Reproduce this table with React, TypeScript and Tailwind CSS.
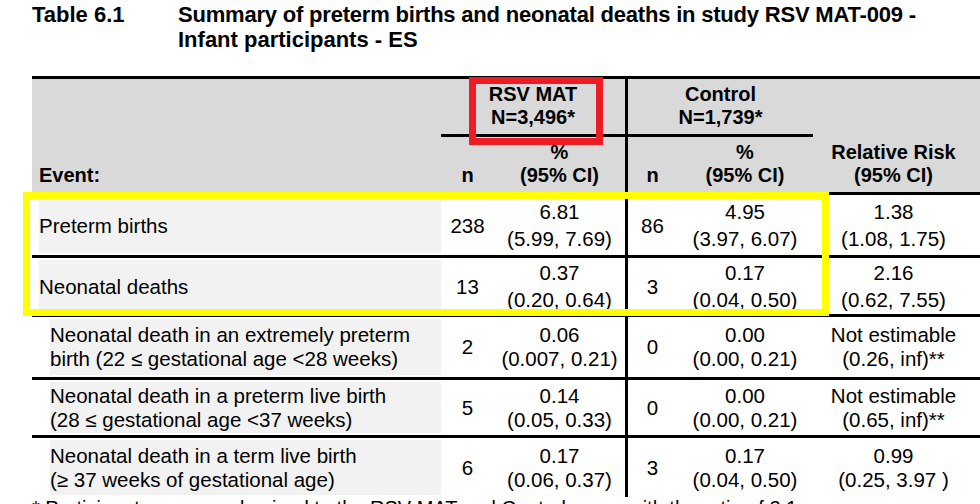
import React from 'react'

const COLS = 'grid grid-cols-[409px_53px_131px_52px_136px_167px]'

type Row = {
  label: string[]
  main: boolean
  h: string
  lead: string
  n1: string
  p1: string[]
  n2: string
  p2: string[]
  rr: string[]
  last?: boolean
}

const rows: Row[] = [
  {
    label: ['Preterm births'],
    main: true,
    h: 'h-[63px]',
    lead: 'leading-[27px]',
    n1: '238',
    p1: ['6.81', '(5.99, 7.69)'],
    n2: '86',
    p2: ['4.95', '(3.97, 6.07)'],
    rr: ['1.38', '(1.08, 1.75)'],
  },
  {
    label: ['Neonatal deaths'],
    main: true,
    h: 'h-[59px]',
    lead: 'leading-[27px]',
    n1: '13',
    p1: ['0.37', '(0.20, 0.64)'],
    n2: '3',
    p2: ['0.17', '(0.04, 0.50)'],
    rr: ['2.16', '(0.62, 7.55)'],
  },
  {
    label: ['Neonatal death in an extremely preterm', 'birth (22 ≤ gestational age <28 weeks)'],
    main: false,
    h: 'h-[63px]',
    lead: 'leading-[24px]',
    n1: '2',
    p1: ['0.06', '(0.007, 0.21)'],
    n2: '0',
    p2: ['0.00', '(0.00, 0.21)'],
    rr: ['Not estimable', '(0.26, inf)**'],
  },
  {
    label: ['Neonatal death in a preterm live birth', '(28 ≤ gestational age <37 weeks)'],
    main: false,
    h: 'h-[58px]',
    lead: 'leading-[24px]',
    n1: '5',
    p1: ['0.14', '(0.05, 0.33)'],
    n2: '0',
    p2: ['0.00', '(0.00, 0.21)'],
    rr: ['Not estimable', '(0.65, inf)**'],
  },
  {
    label: ['Neonatal death in a term live birth', '(≥ 37 weeks of gestational age)'],
    main: false,
    h: 'h-[59px]',
    lead: 'leading-[24px]',
    n1: '6',
    p1: ['0.17', '(0.06, 0.37)'],
    n2: '3',
    p2: ['0.17', '(0.04, 0.50)'],
    rr: ['0.99', '(0.25, 3.97 )'],
    last: true,
  },
]

function Lines({ items }: { items: string[] }) {
  return (
    <>
      {items.map((t, i) => (
        <div key={i} className="whitespace-nowrap">
          {t}
        </div>
      ))}
    </>
  )
}

export default function App() {
  return (
    <div className="w-[980px] h-[504px] overflow-hidden bg-white text-black font-['Liberation_Sans',Arial,sans-serif]">
      {/* title */}
      <div className="flex pl-[32px] pt-[2px] text-[22px] font-bold leading-[25px]">
        <div className="w-[146px]">Table 6.1</div>
        <div className="whitespace-nowrap">
          <div className="tracking-[-0.2px]">Summary of preterm births and neonatal deaths in study RSV MAT-009 -</div>
          <div>Infant participants - ES</div>
        </div>
      </div>

      <div className="relative ml-[32px] mt-[24px] w-[948px] border-t-[3px] border-black">
        {/* header */}
        <div className={`${COLS} grid-rows-[58px_55px] border-b-[3px] border-black bg-[#d9d9d9] text-[20px] font-bold leading-[23px]`}>
          <div className="row-span-2 flex items-end pb-[5px] pl-[7px]">Event:</div>
          <div className="col-span-2 border-b-[3px] border-black pt-[4px] text-center">
            <div>RSV MAT</div>
            <div>N=3,496*</div>
          </div>
          <div className="col-span-2 border-b-[3px] border-l-[3px] border-black pt-[4px] text-center">
            <div>Control</div>
            <div>N=1,739*</div>
          </div>
          <div className="row-span-2 flex flex-col items-center justify-end pb-[5px] pr-[6px] text-center">
            <div>Relative Risk</div>
            <div>(95% CI)</div>
          </div>
          <div className="flex items-end justify-center pb-[5px]">n</div>
          <div className="flex flex-col items-center justify-end pb-[5px]">
            <div>%</div>
            <div>(95% CI)</div>
          </div>
          <div className="flex items-end justify-center border-l-[3px] border-black pb-[5px]">n</div>
          <div className="flex flex-col items-center justify-end pb-[5px]">
            <div>%</div>
            <div>(95% CI)</div>
          </div>
        </div>

        {/* body */}
        {rows.map((r, i) => (
          <div
            key={i}
            className={`${COLS} ${r.h} ${r.last ? '' : 'border-b-[3px] border-black'} text-[20.5px] ${r.lead}`}
          >
            <div
              className={`flex flex-col justify-center bg-[#f2f2f2] bg-clip-content py-[2px] ${r.main ? 'pl-[7px]' : 'pl-[18px]'}`}
            >
              <Lines items={r.label} />
            </div>
            <div className="flex items-center justify-center">{r.n1}</div>
            <div className="flex flex-col items-center justify-center">
              <Lines items={r.p1} />
            </div>
            <div className="flex items-center justify-center border-l-[3px] border-black">{r.n2}</div>
            <div className="flex flex-col items-center justify-center">
              <Lines items={r.p2} />
            </div>
            <div className="flex flex-col items-center justify-center pr-[6px]">
              <Lines items={r.rr} />
            </div>
          </div>
        ))}

        {/* highlight boxes */}
        <div className="absolute left-[437px] top-[-2px] h-[68px] w-[134px] border-[7px] border-[#ed1c24]" />
        <div className="absolute left-[-9px] top-[113px] h-[124px] w-[806px] border-[7px] border-[#ffff00]" />
      </div>

      <div className="pl-[32px] text-[20px] leading-[22px] whitespace-nowrap">
        * Participants were randomized to the RSV MAT and Control group with the ratio of 2:1
      </div>
    </div>
  )
}
